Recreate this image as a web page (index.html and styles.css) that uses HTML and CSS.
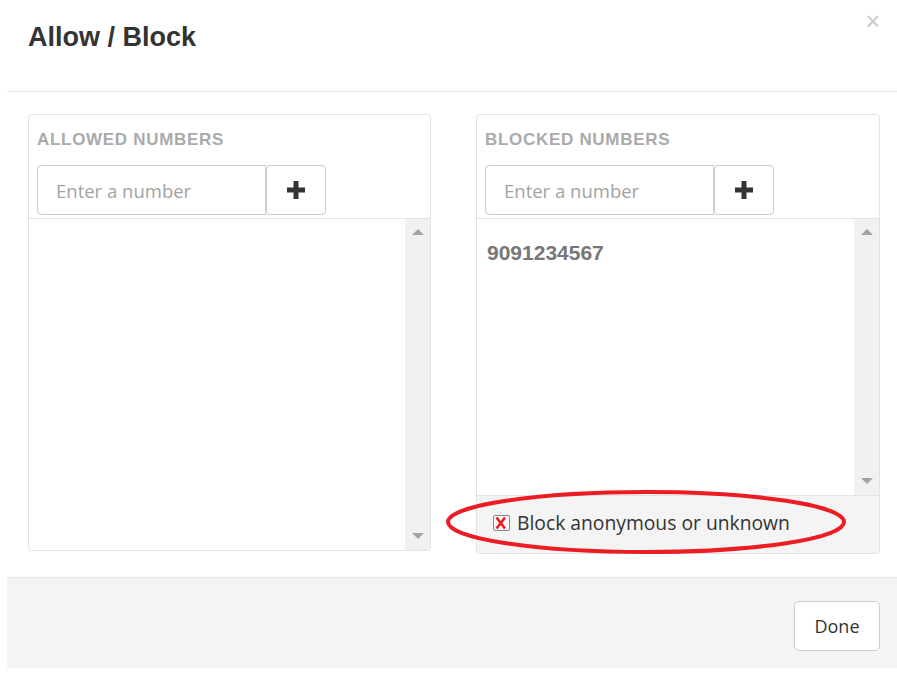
FILE: index.html
```html
<!DOCTYPE html>
<html lang="en">
<head>
    <meta charset="UTF-8">
    <meta name="viewport" content="width=device-width, initial-scale=1.0">
    <title>Allow / Block</title>
    <link rel="stylesheet" href="styles.css">
</head>
<body>
    <div class="modal">
        <div class="modal-header">
            <h2 class="modal-title">Allow / Block</h2>
            <button class="close" type="button">&times;</button>
        </div>

        <div class="modal-body">
            <div class="panel panel-allowed">
                <div class="panel-head">
                    <h4>Allowed numbers</h4>
                    <div class="add-row">
                        <input type="text" placeholder="Enter a number">
                        <button class="add-btn" type="button">
                            <svg width="18" height="18" viewBox="0 0 18 18"><rect x="6.5" y="0" width="5" height="18" fill="#333"/><rect x="0" y="6.5" width="18" height="5" fill="#333"/></svg>
                        </button>
                    </div>
                </div>
                <div class="list">
                    <ul class="numbers"></ul>
                    <div class="scrollbar"><span class="arrow up"></span><span class="arrow down"></span></div>
                </div>
            </div>

            <div class="panel panel-blocked">
                <div class="panel-head">
                    <h4>Blocked numbers</h4>
                    <div class="add-row">
                        <input type="text" placeholder="Enter a number">
                        <button class="add-btn" type="button">
                            <svg width="18" height="18" viewBox="0 0 18 18"><rect x="6.5" y="0" width="5" height="18" fill="#333"/><rect x="0" y="6.5" width="18" height="5" fill="#333"/></svg>
                        </button>
                    </div>
                </div>
                <div class="list">
                    <ul class="numbers">
                        <li>9091234567</li>
                    </ul>
                    <div class="scrollbar"><span class="arrow up"></span><span class="arrow down"></span></div>
                </div>
                <div class="panel-foot">
                    <label class="check">
                        <span class="box">
                            <svg width="12" height="14" viewBox="0 0 12 14"><path d="M1.5 1.5 L10 12.5 M10 1.5 L1.5 12.5" stroke="#ec1c24" stroke-width="2.6" fill="none"/></svg>
                        </span>
                        Block anonymous or unknown
                    </label>
                </div>
                <svg class="mark" width="404" height="68" viewBox="0 0 404 68">
                    <ellipse cx="201" cy="33" rx="198" ry="30" fill="none" stroke="#ec1c24" stroke-width="4"/>
                </svg>
            </div>
        </div>

        <div class="modal-footer">
            <button class="done" type="button">Done</button>
        </div>
    </div>
</body>
</html>
```

FILE: styles.css
```css
        body {
            margin: 0;
            background-color: #fff;
            font-family: "Liberation Sans", Arial, sans-serif;
            color: #333;
        }
        .modal {
            margin-left: 7px;
            width: 890px;
            height: 668px;
            display: flex;
            flex-direction: column;
        }
        .modal-header {
            display: flex;
            justify-content: space-between;
            align-items: flex-start;
            padding: 22px 17px 0 21px;
            height: 69px;
            border-bottom: 1px solid #e5e5e5;
        }
        .modal-title {
            margin: 0;
            font-size: 27px;
            line-height: 30px;
            font-weight: bold;
            color: #333;
        }
        .close {
            margin-top: -16px;
            padding: 0;
            border: none;
            background: none;
            font-family: "Liberation Sans", Arial, sans-serif;
            font-size: 25px;
            line-height: 30px;
            color: #c8c8c8;
            cursor: pointer;
        }
        .modal-body {
            flex: 1;
            display: grid;
            grid-template-columns: 403px 404px;
            column-gap: 45px;
            align-items: start;
            padding: 22px 17px 0 21px;
        }
        .panel {
            position: relative;
            box-sizing: border-box;
            display: flex;
            flex-direction: column;
            border: 1px solid #e3e3e3;
            border-radius: 4px;
        }
        .panel-allowed {
            height: 437px;
        }
        .panel-blocked {
            height: 440px;
        }
        .panel-head {
            padding: 15px 8px 3px;
        }
        .panel-head h4 {
            margin: 0;
            font-size: 17px;
            line-height: 20px;
            letter-spacing: 0.7px;
            text-transform: uppercase;
            color: #aaa;
        }
        .add-row {
            display: flex;
            margin-top: 15px;
            height: 50px;
        }
        .add-row input {
            box-sizing: border-box;
            width: 229px;
            height: 50px;
            padding: 0 18px;
            border: 1px solid #ccc;
            border-radius: 4px 0 0 4px;
            font-family: "Open Sans", sans-serif;
            font-size: 18.5px;
            color: #333;
            outline: none;
        }
        .add-row input::placeholder {
            color: #a3a3a3;
        }
        .add-btn {
            box-sizing: border-box;
            width: 60px;
            height: 50px;
            display: flex;
            justify-content: center;
            align-items: center;
            background-color: #fff;
            border: 1px solid #ccc;
            border-radius: 4px;
            cursor: pointer;
        }
        .list {
            flex: 1;
            display: flex;
            border-top: 1px solid #e3e3e3;
        }
        .numbers {
            flex: 1;
            margin: 0;
            padding: 22px 10px 0;
            list-style: none;
        }
        .numbers li {
            font-size: 21px;
            line-height: 24px;
            font-weight: bold;
            color: #777;
        }
        .scrollbar {
            width: 25px;
            display: flex;
            flex-direction: column;
            justify-content: space-between;
            align-items: center;
            padding: 10px 0 11px;
            background-color: #f1f1f1;
        }
        .arrow {
            width: 0;
            height: 0;
            border-left: 6px solid transparent;
            border-right: 6px solid transparent;
        }
        .arrow.up {
            border-bottom: 6px solid #a3a3a3;
        }
        .arrow.down {
            border-top: 6px solid #a3a3a3;
        }
        .panel-foot {
            height: 58px;
            box-sizing: border-box;
            display: flex;
            align-items: center;
            padding: 0 16px 4px;
            background-color: #f4f4f4;
            border-top: 1px solid #e3e3e3;
            border-radius: 0 0 4px 4px;
        }
        .check {
            display: flex;
            align-items: center;
            gap: 7px;
            font-family: "Open Sans", sans-serif;
            font-size: 19.3px;
            color: #333;
        }
        .box {
            box-sizing: border-box;
            width: 17px;
            height: 16px;
            display: flex;
            align-items: center;
            padding-left: 1px;
            border: 1px solid #888;
            border-radius: 2px;
            background-color: #f8f8f8;
        }
        .mark {
            position: absolute;
            left: -32px;
            top: 374px;
            pointer-events: none;
        }
        .modal-footer {
            height: 91px;
            box-sizing: border-box;
            display: flex;
            justify-content: flex-end;
            align-items: flex-start;
            padding: 23px 17px 0;
            background-color: #f4f4f4;
            border-top: 1px solid #e5e5e5;
        }
        .done {
            width: 86px;
            height: 50px;
            background-color: #fff;
            border: 1px solid #ccc;
            border-radius: 5px;
            font-family: "Open Sans", sans-serif;
            font-size: 18px;
            color: #333;
            cursor: pointer;
        }
```
